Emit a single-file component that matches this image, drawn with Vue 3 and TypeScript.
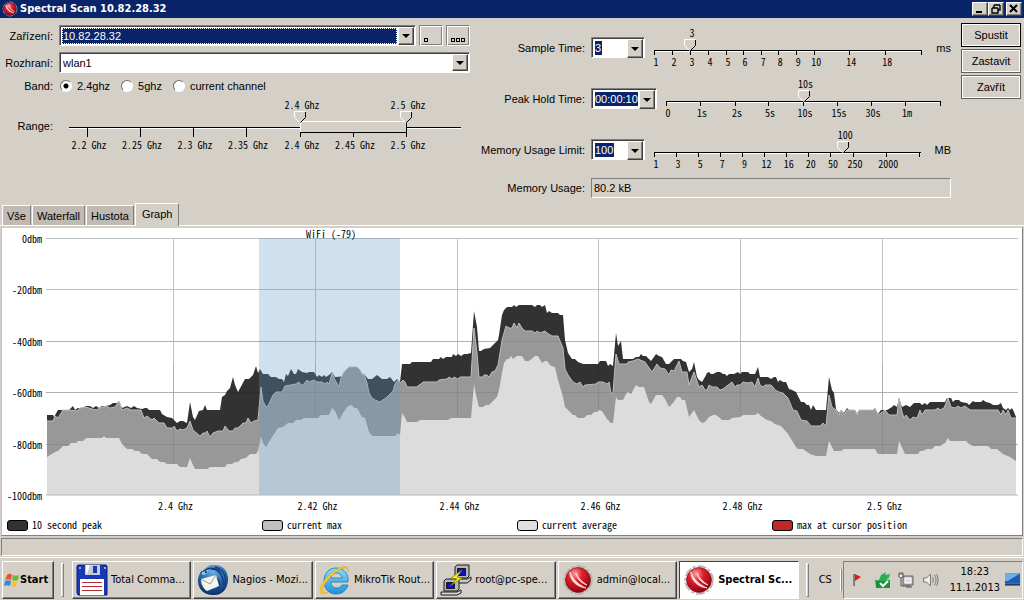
<script setup lang="ts">
import { ref } from 'vue'

interface Tick { at: number; label?: string }
interface Scale {
  id: string
  name: string
  value: string
  thumb: number
  ticks: Tick[]
  unit?: string
}

const ticks = (positions: number[], labels: string[], start: number, end: number): Tick[] =>
  positions.map((p, i) => ({ at: ((p - start) / (end - start)) * 100, label: labels[i] }))

const band = ref('2.4ghz')
const bands = ['2.4ghz', '5ghz', 'current channel']
const device = ref('10.82.28.32')
const iface = ref('wlan1')
const activeTab = ref('Graph')
const tabs = ['Vše', 'Waterfall', 'Hustota', 'Graph']
const actions = ['Spustit', 'Zastavit', 'Zavřít']

const rangeTicks = ticks(
  [87, 140, 193, 246, 300, 353, 406],
  ['2.2 Ghz', '2.25 Ghz', '2.3 Ghz', '2.35 Ghz', '2.4 Ghz', '2.45 Ghz', '2.5 Ghz'], 69, 461)
const rangeLow = rangeTicks[4].at
const rangeHigh = rangeTicks[6].at

const scales = ref<Scale[]>([
  {
    id: 'sample', name: 'Sample Time:', value: '3', thumb: 13.4, unit: 'ms',
    ticks: ticks([654, 672, 690, 708, 726, 743, 761, 778, 796, 814, 849, 885, 921],
      ['1', '2', '3', '4', '5', '6', '7', '8', '9', '10', '14', '18'], 654, 922)
  },
  {
    id: 'hold', name: 'Peak Hold Time:', value: '00:00:10', thumb: 50,
    ticks: ticks([666, 700, 735, 768, 803, 837, 871, 905, 940],
      ['0', '1s', '2s', '5s', '10s', '15s', '30s', '1m'], 666, 941)
  },
  {
    id: 'limit', name: 'Memory Usage Limit:', value: '100', thumb: 71, unit: 'MB',
    ticks: ticks([654, 676, 698, 720, 742, 764, 786, 808, 830, 852, 885, 918],
      ['1', '3', '5', '7', '9', '12', '16', '20', '50', '250', '2000'], 654, 919)
  }
])
const thumbText: Record<string, string> = { sample: '3', hold: '10s', limit: '100' }

const left = 46
const width = 972
const top = 238
const height = 257
const pct = (x: number) => `${((x - left) / width) * 100}%`
const levels = [0, -20, -40, -60, -80, -100].map(v => ({ text: `${v}dbm`, y: -v }))
const freqs = [173.5, 315.5, 457.5, 598.5, 740.5, 882.5].map((x, i) => ({
  x, text: ['2.4 Ghz', '2.42 Ghz', '2.44 Ghz', '2.46 Ghz', '2.48 Ghz', '2.5 Ghz'][i]
}))

const peak = `47,415 53,415 54,417 58,410 69,410 73,406 75,410 78,408 82,408 86,406 90,406 93,408 96,406 99,408 102,406 106,406
110,405 113,403 117,403 119,401 122,408 127,406 131,408 134,406 137,408 142,409 145,408 147,408 149,410 160,410 162,414 167,417
172,418 177,423 180,421 183,421 187,423 190,402 193,417 195,420 199,411 203,410 205,405 207,410 220,410 222,397 225,395 227,391
230,388 233,377 235,385 238,392 245,379 249,379 253,375 256,366 258,373 260,369 263,374 268,374 271,377 276,377 279,379 282,379
284,382 286,374 288,376 291,369 294,374 296,374 298,369 302,372 307,373 309,372 314,372 317,377 319,375 322,377 324,375 326,377
329,375 332,372 335,377 365,375 368,379 372,379 377,375 382,379 387,379 390,377 394,382 397,379 400,382 402,364 410,364 412,362
431,362 433,359 439,359 441,357 443,359 446,357 452,357 453,354 456,356 458,354 461,356 464,354 467,354 471,353 474,311 477,327
479,351 481,351 484,349 490,348 493,345 498,340 499,335 502,315 504,310 507,307 512,307 514,305 516,307 519,305 532,305 535,307
537,305 540,305 542,307 545,305 547,313 549,311 552,313 558,313 560,315 563,315 565,340 568,353 572,359 575,359 578,362 583,364
598,364 600,361 606,361 608,366 610,364 613,366 616,333 618,346 621,341 623,359 633,359 636,357 639,357 641,354 643,356 646,356
651,361 654,357 656,354 659,356 662,357 666,364 669,364 674,359 681,359 683,361 686,362 689,372 692,369 694,362 697,377 699,380
702,382 705,377 707,373 709,372 711,374 713,374 717,372 720,372 723,374 725,374 727,376 729,374 734,374 738,372 740,374 742,372
748,372 750,374 755,374 758,367 760,377 768,377 771,379 774,377 776,377 778,382 780,380 783,382 786,382 789,389 792,390 796,392
801,402 804,402 807,405 809,405 811,410 813,405 816,410 826,410 829,377 832,390 834,393 836,409 839,413 841,410 844,413 847,408
849,410 855,410 857,414 859,410 876,410 878,414 881,410 887,410 892,407 894,405 897,407 899,398 902,407 906,405 910,407 914,403
920,403 922,405 925,403 927,405 930,402 945,402 947,398 951,398 953,402 955,400 959,400 961,402 967,403 969,405 973,401 975,402
981,402 983,400 986,402 990,403 993,405 998,405 1001,403 1003,408 1006,410 1008,408 1010,410 1012,408 1014,412 1016,417`

const maximum = `47,421 53,421 55,416 58,418 63,410 69,410 77,411 80,408 86,407 92,409 96,410 100,408 106,406 110,408 115,407 119,401
122,410 127,408 131,410 141,410 144,418 147,416 152,420 154,418 159,423 164,423 167,428 173,428 174,426 177,431 180,429 183,430
187,428 190,421 193,430 200,436 203,433 206,433 207,431 210,437 213,433 218,431 223,431 225,426 229,431 233,431 235,428 238,428
243,423 246,423 248,418 251,423 254,421 258,420 261,387 263,401 266,407 268,406 273,395 276,392 282,392 285,386 296,384 299,382
301,385 303,385 307,380 309,382 314,380 317,382 322,382 325,384 327,382 329,384 332,373 335,380 339,387 341,378 344,372 349,367
357,367 360,370 362,374 364,374 367,383 369,393 372,398 375,400 380,402 387,397 393,391 395,384 398,380 400,383 403,380 405,382
407,387 417,387 419,385 421,384 423,382 437,382 439,380 447,379 449,377 452,379 454,377 458,379 460,377 471,377 474,328 477,353
479,377 483,377 484,375 487,375 489,377 492,372 495,371 498,365 500,353 502,340 506,326 509,328 512,328 514,323 517,328 519,323
522,328 525,331 532,331 535,333 537,331 540,333 545,331 547,333 552,336 558,336 563,348 565,369 568,375 573,382 577,384 580,382
583,387 585,385 596,384 598,382 603,382 607,384 609,382 611,393 613,393 616,354 619,364 627,364 628,362 633,361 638,359 645,362
652,372 657,364 660,368 665,369 669,375 671,370 674,371 679,361 682,372 687,372 689,385 694,372 699,387 702,385 705,390 707,390
709,385 712,387 717,387 720,390 723,389 732,382 735,387 737,385 740,385 743,382 748,383 752,382 755,387 758,378 760,385 763,387
765,385 771,385 773,387 775,390 779,392 783,393 788,398 793,410 797,411 801,420 807,421 811,426 820,426 823,423 826,426 829,395
832,407 836,410 839,415 841,410 844,415 847,410 855,410 857,415 859,410 873,410 875,408 878,415 881,413 885,410 889,415 897,415
899,398 902,412 904,418 906,415 910,420 913,417 917,418 920,410 922,415 925,410 935,410 938,408 940,410 944,408 948,398 951,407
955,408 958,406 961,408 965,406 970,410 998,410 1001,415 1003,410 1006,415 1008,410 1011,418 1016,418`

const average = `47,457 55,452 58,451 63,446 68,446 71,443 76,443 78,441 83,441 86,438 102,438 104,436 106,438 119,438 122,444 127,449
132,449 135,451 139,451 142,454 147,454 152,459 157,459 160,462 164,462 167,464 177,464 180,467 187,467 190,458 193,465 195,469
207,469 210,467 225,467 227,464 232,464 235,462 238,462 241,459 246,458 250,454 256,454 258,451 261,436 263,443 266,447 272,437
278,428 283,427 288,423 293,423 296,420 301,420 304,418 318,418 321,415 329,415 332,408 335,411 339,420 343,413 348,406 352,405
354,408 357,408 362,417 365,418 369,432 372,436 395,436 398,433 400,435 402,413 404,416 407,422 417,422 420,420 448,420 451,418
471,418 474,384 476,395 479,407 483,407 486,405 489,405 497,397 499,390 502,373 504,363 507,359 509,359 511,356 513,359 517,356
522,356 525,361 529,361 535,356 538,356 542,363 545,361 547,361 551,366 555,367 558,380 563,397 565,407 573,415 575,415 578,418
584,418 587,415 591,415 594,412 597,412 599,410 602,411 607,419 611,423 613,423 616,397 618,400 623,400 626,394 628,392 631,394
636,385 639,387 644,387 649,402 651,404 656,395 662,395 665,399 669,407 673,403 677,397 680,397 682,400 685,400 689,417 694,410
699,420 702,423 705,422 709,417 713,415 716,415 720,418 722,420 729,420 732,418 740,417 743,415 755,415 758,413 761,416 767,420
771,421 775,424 781,426 788,434 796,447 798,449 803,449 807,452 810,454 816,456 826,456 829,441 834,451 841,451 844,449 875,449
878,454 897,454 899,441 905,454 918,454 920,451 923,451 927,449 932,449 935,446 940,446 945,443 948,438 950,441 966,441 969,444
973,446 988,446 991,449 997,449 1003,454 1010,457 1016,461`

const area = (points: string) => `47,495 ${points} 1016,495`

const legend = [
  { text: '10 second peak', cls: 'sw-peak' },
  { text: 'current max', cls: 'sw-max' },
  { text: 'current average', cls: 'sw-avg' },
  { text: 'max at cursor position', cls: 'sw-cursor' }
]

const tasks = [
  { text: 'Total Comma...', icon: 'floppy' },
  { text: 'Nagios - Mozi...', icon: 'mail' },
  { text: 'MikroTik Rout...', icon: 'browser' },
  { text: 'root@pc-spe...', icon: 'terminal' },
  { text: 'admin@local...', icon: 'sphere' },
  { text: 'Spectral Sc...', icon: 'sphere', active: true }
]
</script>

<template>
  <div class="desktop">
    <svg class="defs" width="0" height="0" aria-hidden="true">
      <defs>
        <radialGradient id="red" cx="38%" cy="25%" r="75%">
          <stop offset="0" stop-color="#f9a0a4" /><stop offset=".4" stop-color="#e0202c" /><stop offset="1" stop-color="#8c0410" />
        </radialGradient>
        <radialGradient id="blue" cx="50%" cy="20%" r="80%">
          <stop offset="0" stop-color="#6fb4e6" /><stop offset=".5" stop-color="#2a6cb0" /><stop offset="1" stop-color="#0c2c64" />
        </radialGradient>
        <linearGradient id="sky" x1="0" y1="0" x2="0" y2="1">
          <stop offset="0" stop-color="#8adcf8" /><stop offset="1" stop-color="#1e90d8" />
        </linearGradient>
        <symbol id="sphere" viewBox="0 0 32 32">
          <circle cx="16" cy="16" r="14" fill="none" stroke="#b4b4b4" stroke-width="1.5" stroke-dasharray="9 2 3 2" />
          <circle cx="16" cy="16" r="12.5" fill="url(#red)" stroke="#801018" stroke-width=".7" />
          <path d="M8 8c0 9 7 15 16 16C17 21 11 16 8 8zM14 9c1 6 5 10 11 12-5-3-9-7-11-12z" fill="#ffe0e0" stroke="#ffd0d0" stroke-width=".9" stroke-linejoin="round" />
        </symbol>
        <symbol id="floppy" viewBox="0 0 32 32">
          <path d="M1 2l1-1h28l1 1v29H2l-1-2z" fill="#1838b8" stroke="#0c1c70" />
          <path d="M9 1h15v10H9z" fill="#c4ccd8" /><path d="M10 1h4l-3 9h-1z" fill="#fff" /><path d="M17 2h4v7h-4z" fill="#1838b8" />
          <path d="M4 15h24v16H4z" fill="#fff" /><path d="M6 18.5h20M6 22.5h20M6 26.5h20" stroke="#b02c34" />
          <path d="M3 3h2v2H3zM28 3h2v2h-2z" fill="#90a8f0" />
        </symbol>
        <symbol id="mail" viewBox="0 0 32 32">
          <path d="M16 1C26 0 32 8 31 17s-7 15-15 14C7 31 1 25 1 17c0-5 2-7 3-10 2 0 3-1 5-3 2-2 4-3 7-3z" fill="url(#blue)" />
          <path d="M6 8c6-6 15-5 18 2M14 5c8 0 13 7 12 16M18 3c8 2 12 9 10 18M20 14c4 4 3 10-3 15" fill="none" stroke="#143c7c" stroke-width="1.3" />
          <path d="M4 15l15-4 3 11-12 5c-3-2-6-6-6-12z" fill="#f6f4ee" /><path d="M4 15l9 5 6-9" fill="none" stroke="#a49c90" />
          <path d="M5 8c2 0 4-2 7-2-1 3-4 5-7 5z" fill="#8cc4ec" /><circle cx="9" cy="8" r="1" fill="#102040" />
        </symbol>
        <symbol id="browser" viewBox="0 0 32 32">
          <path d="M29 18H12c0 4 3 6 6 6 2 0 4-1 5-3h6c-2 6-6 9-12 9C9 30 5 24 5 17 5 9 10 4 17 4c8 0 13 6 12 14zM12 14h11c0-3-3-5-6-5s-5 2-5 5z" fill="url(#sky)" stroke="#1878b8" stroke-width=".8" />
          <path d="M29 8c1-4-1-7-6-5C14 5 2 18 1 26c0 6 6 3 8 2C5 29 3 28 4 24 7 16 18 5 25 4c3-1 4 1 4 4z" fill="#f8cc30" stroke="#d89c10" stroke-width=".5" />
        </symbol>
        <symbol id="terminal" viewBox="0 0 32 32">
          <g stroke="#181818"><path d="M15 3l2-2h12v11l-2 2H15z" fill="#b8b8b8" /><path d="M17.500 4.500h8v7h-8z" fill="#1010c0" />
            <path d="M13 15h14l4-2v3l-4 3H13z" fill="#c8c8c8" /><path d="M4 17l2-2h13v10l-2 2H4z" fill="#b8b8b8" />
            <path d="M6.500 18.500h8v6h-8z" fill="#1010c0" /><path d="M1 28h16l4-2v3l-4 2H1z" fill="#d8d8d8" /></g>
          <path d="M22 6L11 14l6 1-7 7 12-8-5-1z" fill="#f8f010" stroke="#807800" stroke-width=".6" />
        </symbol>
      </defs>
    </svg>

    <header class="titlebar">
      <svg class="app-icon"><use href="#sphere" /></svg>
      <h1>Spectral Scan 10.82.28.32</h1>
      <div class="window-buttons">
        <button type="button" aria-label="Minimize"><svg viewBox="0 0 12 10"><path d="M2 8h6" /></svg></button>
        <button type="button" aria-label="Restore"><svg viewBox="0 0 12 10"><path d="M4 1h6M4 1v3M10 1v5H8M2 4h6M2 4v5h6V4" class="thin" /></svg></button>
        <button type="button" aria-label="Close"><svg viewBox="0 0 12 10"><path d="M2 1l7 7M9 1L2 8" /></svg></button>
      </div>
    </header>

    <main class="window">
      <form class="settings" @submit.prevent>
        <div class="source">
          <label for="device">Zařízení:</label>
          <div class="device-row">
            <div class="combo">
              <select id="device" v-model="device" class="chosen"><option>10.82.28.32</option></select>
              <span class="arrow"></span>
            </div>
            <button type="button" class="dots" aria-label="Browse"><i></i></button>
            <button type="button" class="dots" aria-label="More"><i></i><i></i><i></i></button>
          </div>
          <label for="iface">Rozhraní:</label>
          <div class="combo">
            <select id="iface" v-model="iface"><option>wlan1</option></select>
            <span class="arrow"></span>
          </div>
          <span class="caption">Band:</span>
          <div class="bands">
            <label v-for="b in bands" :key="b"><input v-model="band" type="radio" name="band" :value="b">{{ b }}</label>
          </div>
          <span class="caption">Range:</span>
          <div class="range">
            <svg class="scale">
              <line class="shade" x1="0" x2="100%" y1="29.5" y2="29.5" />
              <line x1="0" x2="100%" y1="28.5" y2="28.5" />
              <g v-for="t in rangeTicks" :key="t.at">
                <line :x1="t.at + '%'" :x2="t.at + '%'" y1="28" y2="38" />
                <text :x="t.at + '%'" y="50" dx="2">{{ t.label }}</text>
              </g>
              <rect class="span" :x="rangeLow + '%'" y="22" :width="rangeHigh - rangeLow + '%'" height="12" />
              <line class="shade" :x1="rangeLow + '%'" :x2="rangeHigh + '%'" y1="22.5" y2="22.5" />
              <line class="shade" :x1="rangeLow + '%'" :x2="rangeLow + '%'" y1="22" y2="33" />
              <line :x1="rangeLow + '%'" :x2="rangeHigh + '%'" y1="33.5" y2="33.5" />
              <line :x1="rangeHigh + '%'" :x2="rangeHigh + '%'" y1="23" y2="34" />
              <text :x="rangeLow + '%'" y="10" dx="2">2.4 Ghz</text>
              <text :x="rangeHigh + '%'" y="10" dx="2">2.5 Ghz</text>
            </svg>
            <input type="range" aria-label="Range start" min="0" max="100" step="0.1" :value="rangeLow">
            <input type="range" aria-label="Range end" min="0" max="100" step="0.1" :value="rangeHigh">
          </div>
        </div>

        <div class="timing">
          <template v-for="s in scales" :key="s.id">
            <label :for="s.id">{{ s.name }}</label>
            <div class="timing-row">
              <div class="combo edit" :class="s.id">
                <input :id="s.id" v-model="s.value" type="text">
                <button type="button" class="arrow" :aria-label="s.name + ' list'"></button>
              </div>
              <div class="slider">
                <svg class="scale">
                  <line class="shade" x1="0" x2="100%" y1="29.5" y2="29.5" />
                  <line x1="0" x2="100%" y1="28.5" y2="28.5" />
                  <g v-for="t in s.ticks" :key="t.at">
                    <line :x1="t.at + '%'" :x2="t.at + '%'" y1="28" y2="33" />
                    <text :x="t.at + '%'" y="44" dx="2">{{ t.label }}</text>
                  </g>
                  <text :x="s.thumb + '%'" y="15" dx="2">{{ thumbText[s.id] }}</text>
                </svg>
                <input type="range" :aria-label="s.name" min="0" max="100" step="0.1" :value="s.thumb">
              </div>
              <span v-if="s.unit" class="unit">{{ s.unit }}</span>
            </div>
          </template>
          <label for="usage">Memory Usage:</label>
          <input id="usage" class="usage" type="text" value="80.2 kB" readonly>
        </div>

        <div class="actions">
          <button v-for="a in actions" :key="a" type="button">{{ a }}</button>
        </div>
      </form>

      <nav class="tabs" role="tablist">
        <button v-for="t in tabs" :key="t" type="button" role="tab" :aria-selected="t === activeTab" :class="{ on: t === activeTab }" @click="activeTab = t">{{ t }}</button>
      </nav>

      <section class="graph">
        <svg class="chart">
          <svg :viewBox="`${left} ${top} ${width} ${height}`" preserveAspectRatio="none" width="100%" height="100%">
            <g class="grid">
              <path v-for="l in levels" :key="l.y" :d="`M46 ${top + .5 + Math.round(l.y * 2.57)}h972`" />
              <path v-for="f in freqs" :key="f.x" :d="`M${f.x} 238v257`" />
            </g>
            <polygon :points="area(peak)" class="peak" />
            <polygon :points="area(maximum)" class="maximum" />
            <polyline :points="maximum" class="edge" />
            <g class="grid faint">
              <path d="M46 341.5h972M46 392.5h972M46 444.5h972" />
              <path v-for="f in freqs" :key="f.x" :d="`M${f.x} 364v131`" />
            </g>
            <polygon :points="area(average)" class="average" />
            <rect x="259" y="238" width="141" height="257" class="wifi" />
          </svg>
          <line class="base" x1="0" x2="100%" y1="100%" y2="100%" />
          <text v-for="l in levels" :key="l.y" class="level" x="-4" :y="l.y + '%'" dy="5">{{ l.text }}</text>
          <text v-for="f in freqs" :key="f.x" :x="pct(f.x)" y="100%" dx="2" dy="15">{{ f.text }}</text>
          <text :x="pct(331)" y="0" dy="0">WiFi (-79)</text>
        </svg>
        <ul class="legend">
          <li v-for="l in legend" :key="l.text"><i :class="l.cls"></i>{{ l.text }}</li>
        </ul>
      </section>
      <div class="status"></div>
    </main>

    <footer class="taskbar">
      <button type="button" class="start">
        <svg viewBox="0 0 16 16">
          <path d="M3 3c2-2 4-1 5 0L7 8C5 7 3 7 1 8z" fill="#e8542c" /><path d="M9 3c2 1 4 1 6 0l-1 5c-2 1-4 1-6 0z" fill="#6cb83c" />
          <path d="M1 9c2-1 4-1 6 0l-1 5c-2-1-4-1-6 0z" fill="#3c84dc" /><path d="M8 9c2 1 4 1 6 0l-2 5c-2 1-3 1-5 0z" fill="#f4c430" />
        </svg>Start
      </button>
      <span class="sep"></span>
      <div class="tasks">
        <button v-for="t in tasks" :key="t.text" type="button" :class="{ active: t.active }">
          <svg><use :href="'#' + t.icon" /></svg>{{ t.text }}
        </button>
      </div>
      <span class="sep"></span>
      <span class="lang">CS</span>
      <span class="sep slim"></span>
      <div class="tray">
        <svg class="flag" viewBox="0 0 8 14"><path d="M1 1v12" stroke="#333" /><path d="M2 1l6 3-6 4z" fill="#e01818" /></svg>
        <svg class="sync" viewBox="0 0 18 18"><path d="M1 9h4l2-5 5-3-1 3 5-1-1 4-3 1 4 1v8H2z" fill="#28b050" /><path d="M2 10h14v7H2z" fill="#189040" /><path d="M6 12l3 3 5-5" fill="none" stroke="#fff" stroke-width="2" /></svg>
        <svg class="net" viewBox="0 0 16 16"><path d="M5 4h10v9H5z" fill="#b0b0b0" stroke="#666" /><path d="M7 6h6v5H7z" fill="#ddd" stroke="#fff" /><path d="M1 1v4h4V1M3 5v9h10M2 0v3M4 0v3M8 15h6" fill="none" stroke="#555" /><path d="M2 3h2v2H2z" fill="#fff" /></svg>
        <svg class="volume" viewBox="0 0 16 14"><path d="M1 5h3l4-4v12L4 9H1z" fill="#eee" stroke="#777" /><path d="M10 4c1 2 1 4 0 6M12 2c2 3 2 7 0 10M14 1c2 4 2 8 0 12" fill="none" stroke="#777" /></svg>
        <time>18:23<br>11.1.2013</time>
        <svg class="screen" viewBox="0 0 16 14"><path d="M0 0h16v11H0z" fill="#1c5cb4" /><path d="M0 0h16L3 8H0z" fill="#6caee8" /><path d="M0 11h16v2H0z" fill="#204060" /></svg>
      </div>
    </footer>
  </div>
</template>

<style>
body { background: #d4d0c8; }
</style>

<style scoped>
* { box-sizing: border-box; }
.desktop {
  display: flex; flex-direction: column; height: 100vh; min-height: 520px;
  background: #d4d0c8; color: #000;
  font: 11px/14px "Liberation Sans", Arial, sans-serif;
}
.defs { position: absolute; }
button, input, select { font: inherit; color: inherit; margin: 0; padding: 0; border-radius: 0; }
button { background: #d4d0c8; border: 1px solid; border-color: #fff #404040 #404040 #fff; }

.titlebar { display: flex; align-items: center; height: 18px; padding: 0 2px; background: #0a246a; color: #fff; flex: none; }
.app-icon { width: 16px; height: 16px; margin-right: 2px; }
h1 { flex: 1; margin: 0; font: bold 11px/16px "DejaVu Sans Condensed", "DejaVu Sans", sans-serif; }
.window-buttons { display: flex; }
.window-buttons button { width: 16px; height: 14px; display: grid; place-items: center; box-shadow: inset -1px -1px #808080; }
.window-buttons button:last-child { margin-left: 2px; }
.window-buttons svg { width: 12px; height: 10px; fill: none; stroke: #000; stroke-width: 2; }
.window-buttons .thin { stroke-width: 1.4; }

.window { flex: 1; min-height: 0; display: flex; flex-direction: column; }
.settings { display: grid; grid-template-columns: 470fr 481fr 60px; height: 185px; padding-right: 13px; flex: none; }
.source { display: grid; grid-template-columns: 53px 1fr; column-gap: 6px; row-gap: 6px; padding-top: 7px; align-content: start; align-items: center; }
.source > label, .source > .caption, .timing > label { text-align: right; white-space: nowrap; }
.device-row { display: flex; gap: 3px; }
.device-row .combo { flex: 1; }
.combo {
  display: grid; grid-template-columns: 1fr 16px; height: 21px; padding: 1px; background: #fff;
  border: 1px solid; border-color: #808080 #fff #fff #808080; box-shadow: inset 1px 1px #404040;
}
.combo select { grid-area: 1 / 1 / 2 / 3; appearance: none; border: 0; background: transparent; padding-left: 2px; outline: 0; }
.combo .chosen { background: #0a246a; color: #fff; border: 1px dotted #fff; margin: 1px 17px 1px 1px; padding-left: 0; }
.combo .chosen option { color: #000; background: #fff; }
.arrow { grid-area: 1 / 2; pointer-events: none; display: grid; place-items: center; background: #d4d0c8; border: 1px solid; border-color: #fff #404040 #404040 #fff; box-shadow: inset -1px -1px #808080; }
.arrow::after { content: ""; border: 4px solid transparent; border-top-color: #000; border-bottom: 0; }
.dots { width: 24px; height: 21px; display: flex; align-items: flex-end; gap: 1px; padding: 0 0 3px 4px; border-color: #808080 #fff #fff #808080; box-shadow: inset 1px 1px #fff, inset -1px -1px #808080; }
.dots i { width: 4px; height: 4px; border: 1px solid #000; }
.bands { display: flex; height: 14px; align-items: center; }
.bands label { display: flex; align-items: center; gap: 5px; margin-right: 10px; white-space: nowrap; }
.bands input {
  appearance: none; width: 12px; height: 12px; border-radius: 50%; margin-left: 1px;
  border: 1px solid; border-color: #707070 #fff #fff #707070; background: #fff;
}
.bands input:checked { background: radial-gradient(circle, #000 2px, #fff 3px); }
.range { position: relative; height: 54px; margin: 0 9px 0 10px; }
.scale { display: block; width: 100%; height: 51px; overflow: visible; }
.scale line, .scale rect { shape-rendering: crispEdges; }
.scale line, .base { stroke: #000; }
.scale line.shade { stroke: #fff; }
.scale .span { fill: #d4d0c8; }
text, .legend { font: 10px/14px "Noto Sans Mono CJK SC", "DejaVu Sans Mono", monospace; }
text { text-anchor: middle; fill: #000; }
input[type="range"] {
  appearance: none; position: absolute; left: -6px; top: 12px; width: calc(100% + 12px); height: 12px;
  background: transparent; pointer-events: none; outline: 0;
}
input[type="range"]::-webkit-slider-runnable-track { background: transparent; height: 12px; }
input[type="range"]::-webkit-slider-thumb {
  appearance: none; width: 12px; height: 12px; border: 0; pointer-events: auto;
  background: url("data:image/svg+xml,%3Csvg xmlns='http://www.w3.org/2000/svg' width='12' height='12'%3E%3Cpath d='M.5.5h11v6l-5 5h-1l-5-5z' fill='%23d4d0c8'/%3E%3Cpath d='M11.5.5h-11v6l5 5' fill='none' stroke='%23fff'/%3E%3Cpath d='M11.5 1v5.5l-5 5' fill='none' stroke='%23000'/%3E%3C/svg%3E");
}

.timing { display: grid; grid-template-columns: 115px 1fr; grid-template-rows: 51px 51px 51px 26px; column-gap: 6px; align-items: center; padding-top: 4px; }
.timing-row { display: flex; align-items: center; }
.slider { position: relative; flex: 1; margin: 0 10px 0 9px; }
.slider input[type="range"] { top: 17px; }
.unit { margin-left: 4px; }
.edit { width: 54px; align-items: stretch; }
.edit.hold { width: 66px; }
.edit input { border: 0; outline: 0; background: #0a246a; color: #fff; margin: 2px 0 3px 2px; width: 7px; }
.edit.limit input { width: 19px; }
.edit.hold input { width: 43px; }
.edit .arrow { pointer-events: auto; }
.usage { height: 20px; width: 100%; padding-left: 2px; background: transparent; border: 1px solid; border-color: #808080 #fff #fff #808080; outline: 0; }
.actions { display: flex; flex-direction: column; gap: 2px; padding-top: 5px; margin-left: 10px; width: 60px; }
.actions button { height: 24px; border-color: #606060; box-shadow: inset -1px -1px #fff, inset 1px 1px #fff; }
.actions button:first-child { border-color: #000; }

.tabs { display: flex; align-items: flex-end; gap: 1px; height: 23px; padding-left: 2px; border-bottom: 1px solid #fff; flex: none; }
.tabs button { height: 20px; padding: 0 4px; background: #c0bab2; border-color: #fff #808080 transparent #fff; border-bottom: 0; white-space: nowrap; }
.tabs .on { height: 23px; margin-bottom: -1px; padding: 0 6px 2px; background: #d4d0c8; }
.graph {
  flex: 1; min-height: 0; margin: 1px 1px 0; display: flex; flex-direction: column; background: #fff;
  border: 1px solid; border-color: #d4d0c8 #808080 #808080 #c0c0c0;
}
.chart { flex: 1; min-height: 0; width: auto; margin: 10px 4px 0 44px; overflow: visible; }
.grid path { fill: none; stroke: #c0c0c0; vector-effect: non-scaling-stroke; }
.grid.faint path { stroke: #000; opacity: .08; }
.base { stroke: #b8b8b8; }
.peak { fill: #323232; }
.maximum { fill: #989898; }
.edge { fill: none; stroke: #bcbcbc; vector-effect: non-scaling-stroke; }
.average { fill: #dcdcdc; }
.wifi { fill: #5f9bc6; opacity: .3; }
.level { text-anchor: end; }
.legend { display: grid; grid-template-columns: repeat(4, 1fr); list-style: none; margin: 23px 0 3px 5px; padding: 0; width: 100%; }
.legend li { display: flex; align-items: center; gap: 4px; white-space: nowrap; }
.legend i { width: 21px; height: 11px; border: 1px solid #000; border-radius: 3px; }
.sw-peak { background: #323232; }
.sw-max { background: #c0c0c0; }
.sw-avg { background: #e0e0e0; }
.sw-cursor { background: #c02828; }
.status { height: 18px; margin: 2px 1px 1px; border: 1px solid; border-color: #808080 #fff #fff #808080; flex: none; }

.taskbar { display: flex; align-items: center; height: 43px; flex: none; padding: 2px 1px 1px 2px; border-top: 1px solid #fff; font: 11px/14px "DejaVu Sans Condensed", "DejaVu Sans", sans-serif; }
.taskbar button { height: 38px; display: flex; align-items: center; white-space: nowrap; box-shadow: inset -1px -1px #808080; }
.start { width: 52px; font-weight: bold; padding-left: 1px; }
.start svg { width: 16px; height: 16px; flex: none; }
.sep { width: 3px; height: 34px; margin: 0 8px 0 7px; border: 1px solid; border-color: #fff #808080 #808080 #fff; flex: none; }
.sep.slim { width: 2px; height: 22px; margin: 0 1px 0 6px; border-width: 0 1px; }
.tasks { flex: 1; display: grid; grid-template-columns: repeat(6, 1fr); gap: 2px; }
.tasks button { padding-left: 3px; gap: 3px; overflow: hidden; }
.tasks svg { width: 32px; height: 32px; flex: none; }
.tasks .active { background: #fff; font-weight: bold; border-color: #404040 #fff #fff #404040; box-shadow: none; }
.lang { width: 15px; margin-left: 2px; }
.tray { display: flex; align-items: center; height: 38px; padding: 0 2px 0 9px; border: 1px solid; border-color: #808080 #fff #fff #808080; }
.tray svg { flex: none; }
.flag { width: 8px; height: 14px; margin-right: 13px; }
.sync { width: 18px; height: 18px; margin-right: 6px; }
.net { width: 16px; height: 16px; margin-right: 8px; }
.volume { width: 17px; height: 14px; margin-right: 11px; }
.tray time { text-align: center; line-height: 16px; }
.screen { width: 15px; height: 14px; margin-left: 5px; }
</style>
